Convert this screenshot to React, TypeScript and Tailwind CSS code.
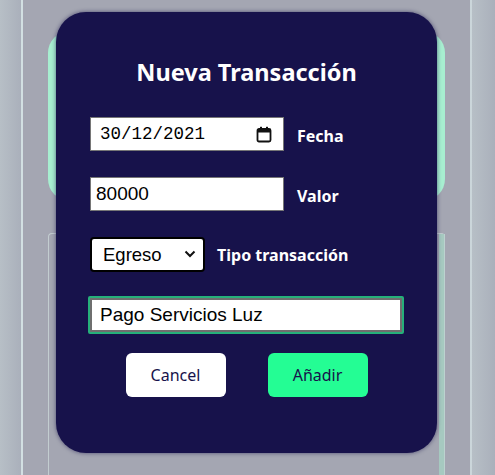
import { useState } from 'react';

const CalendarIcon = () => (
  <svg width="16" height="17" viewBox="0 0 16 17" fill="none">
    <rect x="1.5" y="3" width="13" height="12.5" rx="1.5" stroke="#111" strokeWidth="1.8" />
    <rect x="1.5" y="3" width="13" height="3.5" fill="#111" />
    <rect x="4" y="0.8" width="2" height="3" fill="#111" />
    <rect x="10" y="0.8" width="2" height="3" fill="#111" />
  </svg>
);

export default function App() {
  const [form, setForm] = useState({
    valor: '80000',
    tipo: 'Egreso',
    descripcion: 'Pago Servicios Luz'
  });

  return (
    <div className="relative w-[495px] h-[475px] overflow-hidden bg-[#a4a6b2] flex">
      {/* page behind the overlay */}
      <div className="w-[21px] h-full bg-gradient-to-r from-[#b7bfc6] to-[#aab0bb]" />
      <div className="w-[2px] h-full bg-[#d2dfe2]" />
      <div className="flex-1 flex flex-col px-[25px] pt-[31px]">
        <div className="h-[170px] rounded-[22px] bg-[#a7eed0]" />
        <div className="mt-[32px] flex-1 flex rounded-t-[4px] border-l border-t border-[#c3cdd0] bg-[#a4a6b2]">
          <div className="flex-1" />
          <div className="w-[6px] bg-[#a6c9c0] border-r border-[#bcd2cf]" />
        </div>
      </div>
      <div className="w-[2px] h-full bg-[#cbd6da]" />
      <div className="w-[23px] h-full bg-gradient-to-r from-[#b7bfc6] to-[#aab0bb]" />

      {/* modal */}
      <div className="absolute left-[56px] top-[12px] w-[381px] h-[441px] rounded-[30px] bg-[#17124b] shadow-[0_0_4px_rgba(20,15,70,0.6)] px-[34px] pt-[44px]" style={{ fontFamily: '"Noto Sans", sans-serif' }}>
        <h2 className="text-center text-white font-bold text-[23.5px] leading-[32px] mb-[29px]">
          Nueva Transacción
        </h2>

        <div className="flex flex-col">
          <div className="flex items-center h-[34px]">
            <div className="w-[194px] h-[34px] bg-white border border-[#767676] flex items-center pl-[9px] pr-[11px]">
              <span className="flex-1 text-[17.5px] text-black" style={{ fontFamily: '"Liberation Mono", monospace' }}>30/12/2021</span>
              <CalendarIcon />
            </div>
            <span className="ml-[13px] text-white font-bold text-[16px] mt-[3px]">Fecha</span>
          </div>

          <div className="flex items-center h-[34px] mt-[26px]">
            <input
              type="text"
              value={form.valor}
              onChange={(e) => setForm({ ...form, valor: e.target.value })}
              className="w-[194px] h-[34px] bg-white border border-[#767676] pl-[5px] text-[19px] text-black outline-none"
              style={{ fontFamily: '"Liberation Sans", Arial, sans-serif' }}
            />
            <span className="ml-[13px] text-white font-bold text-[16px] mt-[3px]">Valor</span>
          </div>

          <div className="flex items-center h-[35px] mt-[26px]">
            <div className="relative w-[115px] h-[35px]">
              <select
                value={form.tipo}
                onChange={(e) => setForm({ ...form, tipo: e.target.value })}
                className="appearance-none w-full h-full bg-white border-2 border-black rounded-[4px] pl-[11px] text-[18.5px] text-black outline-none"
                style={{ fontFamily: '"Liberation Sans", Arial, sans-serif' }}
              >
                <option>Egreso</option>
                <option>Ingreso</option>
              </select>
              <svg className="absolute right-[9px] top-[13px] pointer-events-none" width="12" height="8" viewBox="0 0 12 8" fill="none">
                <path d="M1.5 1.5 L6 6 L10.5 1.5" stroke="#111" strokeWidth="2" />
              </svg>
            </div>
            <span className="ml-[12px] text-white font-bold text-[16px]">Tipo transacción</span>
          </div>

          <div className="mt-[24px] -ml-[2px] w-[316px] h-[38px] border-2 border-[#26b07a] rounded-[2px]">
            <input
              type="text"
              value={form.descripcion}
              onChange={(e) => setForm({ ...form, descripcion: e.target.value })}
              className="w-full h-full bg-white border-2 border-[#6f6f6f] pl-[8px] text-[19px] text-black outline-none"
              style={{ fontFamily: '"Liberation Sans", Arial, sans-serif' }}
            />
          </div>

          <div className="flex justify-center gap-[42px] mt-[19px]">
            <button className="w-[100px] h-[44px] rounded-[6px] bg-white text-[#17124b] text-[16px]">
              Cancel
            </button>
            <button className="w-[100px] h-[44px] rounded-[6px] bg-[#24fd94] text-[#17124b] text-[16px]">
              Añadir
            </button>
          </div>
        </div>
      </div>
    </div>
  );
}
